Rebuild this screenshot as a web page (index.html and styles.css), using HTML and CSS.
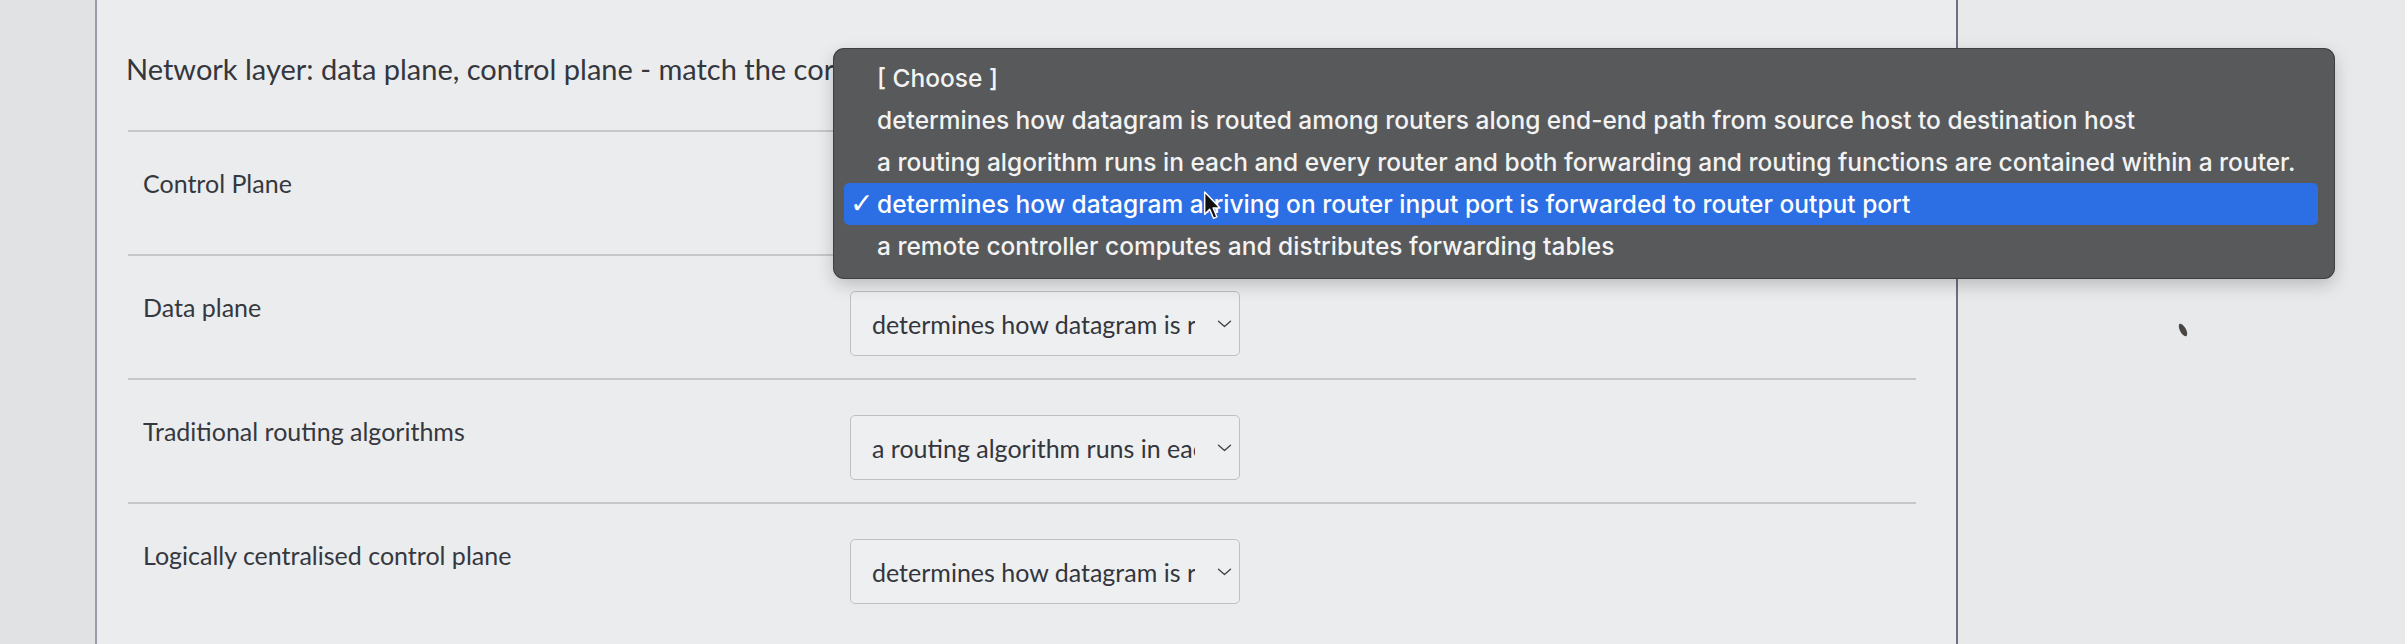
FILE: index.html
```html
<!DOCTYPE html>
<html lang="en">
<head>
<meta charset="utf-8">
<title>Matching question</title>
<link rel="stylesheet" href="styles.css">
</head>
<body>
<div class="screen">
  <div class="gutter"></div>
  <main class="panel">
    <h1 class="title">Network layer: data plane, control plane - match the correct definition</h1>
    <div class="qlist">
      <div class="row">
        <div class="label">Control Plane</div>
        <div class="select"><span class="sel-text">determines how datagram arriving on router input port is forwarded to router output port</span><svg class="chev" viewBox="0 0 15 8" width="15" height="8"><polyline points="1.5,1.2 7.5,6.6 13.5,1.2"/></svg></div>
      </div>
      <div class="row">
        <div class="label">Data plane</div>
        <div class="select"><span class="sel-text">determines how datagram is routed among routers along end-end path from source host to destination host</span><svg class="chev" viewBox="0 0 15 8" width="15" height="8"><polyline points="1.5,1.2 7.5,6.6 13.5,1.2"/></svg></div>
      </div>
      <div class="row">
        <div class="label">Traditional routing algorithms</div>
        <div class="select"><span class="sel-text">a routing algorithm runs in each and every router and both forwarding and routing functions are contained within a router.</span><svg class="chev" viewBox="0 0 15 8" width="15" height="8"><polyline points="1.5,1.2 7.5,6.6 13.5,1.2"/></svg></div>
      </div>
      <div class="row">
        <div class="label">Logically centralised control plane</div>
        <div class="select"><span class="sel-text">determines how datagram is routed among routers along end-end path from source host to destination host</span><svg class="chev" viewBox="0 0 15 8" width="15" height="8"><polyline points="1.5,1.2 7.5,6.6 13.5,1.2"/></svg></div>
      </div>
    </div>
  </main>
  <div class="outside"></div>
</div>

<div class="popup">
  <div class="opt">[ Choose ]</div>
  <div class="opt">determines how datagram is routed among routers along end-end path from source host to destination host</div>
  <div class="opt">a routing algorithm runs in each and every router and both forwarding and routing functions are contained within a router.</div>
  <div class="opt selected"><span class="check">✓</span>determines how datagram arriving on router input port is forwarded to router output port</div>
  <div class="opt">a remote controller computes and distributes forwarding tables</div>
</div>

<svg class="cursor" viewBox="0 0 17 28" width="19" height="32">
  <path d="M1.5 1.5 L1.5 21.5 L6 17 L9.4 25 L12.4 23.7 L9.1 15.8 L15.2 15.8 Z" fill="#111" stroke="#fff" stroke-width="1.3" stroke-linejoin="round"/>
</svg>
<div class="speck"></div>
</body>
</html>
```
FILE: styles.css
```css
* { box-sizing: border-box; }

html, body {
  margin: 0;
  padding: 0;
}

body {
  width: 2405px;
  height: 644px;
  overflow: hidden;
  background: #e6e7e9;
  font-family: Lato, "Noto Sans", sans-serif;
  color: #373a40;
  position: relative;
}

.screen {
  display: flex;
  height: 644px;
}

.gutter {
  width: 95px;
  flex: none;
  background: #e1e2e4;
}

.panel {
  width: 1863px;
  flex: none;
  background: #ebeced;
  border-left: 2px solid #9a9cab;
  border-right: 2px solid #6f6f84;
  padding: 51px 0 0 29px;
}

.outside {
  flex: 1;
  background: #e8e9eb;
}

.title {
  margin: 0 0 44px 0;
  font-size: 29px;
  line-height: 35px;
  font-weight: 400;
  white-space: nowrap;
  color: #34373d;
}

.qlist {
  margin-left: 2px;
  width: 1788px;
}

.row {
  display: grid;
  grid-template-columns: 707px 390px;
  align-items: start;
  border-top: 2px solid #c5c7c9;
  padding: 35px 0 22px 15px;
}

.label {
  font-size: 25px;
  line-height: 30px;
  margin-top: 1px;
  color: #35383e;
}

.select {
  height: 65px;
  display: flex;
  align-items: center;
  border: 1.5px solid #bdc1c5;
  border-radius: 5px;
  background: #eeeff0;
  padding: 0 0 0 21px;
}

.sel-text {
  width: 323px;
  overflow: hidden;
  white-space: nowrap;
  font-size: 25px;
  line-height: 30px;
  color: #33363c;
}

.chev {
  margin-left: 22px;
  fill: none;
  stroke: #44474d;
  stroke-width: 1.4;
  stroke-linecap: round;
  stroke-linejoin: round;
}

/* native select popup (macOS) */
.popup {
  position: absolute;
  left: 834px;
  top: 49px;
  width: 1500px;
  height: 229px;
  background: #58595b;
  border-radius: 10px;
  box-shadow: 0 0 0 1px #3e3f41, 0 6px 18px rgba(0, 0, 0, 0.22);
  padding: 8px 16px 11px 10px;
  font-family: Inter, "Noto Sans", sans-serif;
  font-weight: 500;
  font-size: 24.5px;
  color: #f3f3f3;
}

.opt {
  height: 42px;
  line-height: 42px;
  padding-left: 33px;
  white-space: nowrap;
  position: relative;
  border-radius: 5px;
}

.opt.selected {
  background: #2c6ee4;
  color: #ffffff;
}

.check {
  position: absolute;
  left: 6px;
  top: 0;
  font-family: "DejaVu Sans", sans-serif;
  font-size: 28px;
  font-weight: 700;
}

.cursor {
  position: absolute;
  left: 1203px;
  top: 190px;
}

.speck {
  position: absolute;
  left: 2180px;
  top: 323px;
  width: 6px;
  height: 14px;
  border-radius: 50%;
  background: #4a4646;
  transform: rotate(-28deg);
}
```
